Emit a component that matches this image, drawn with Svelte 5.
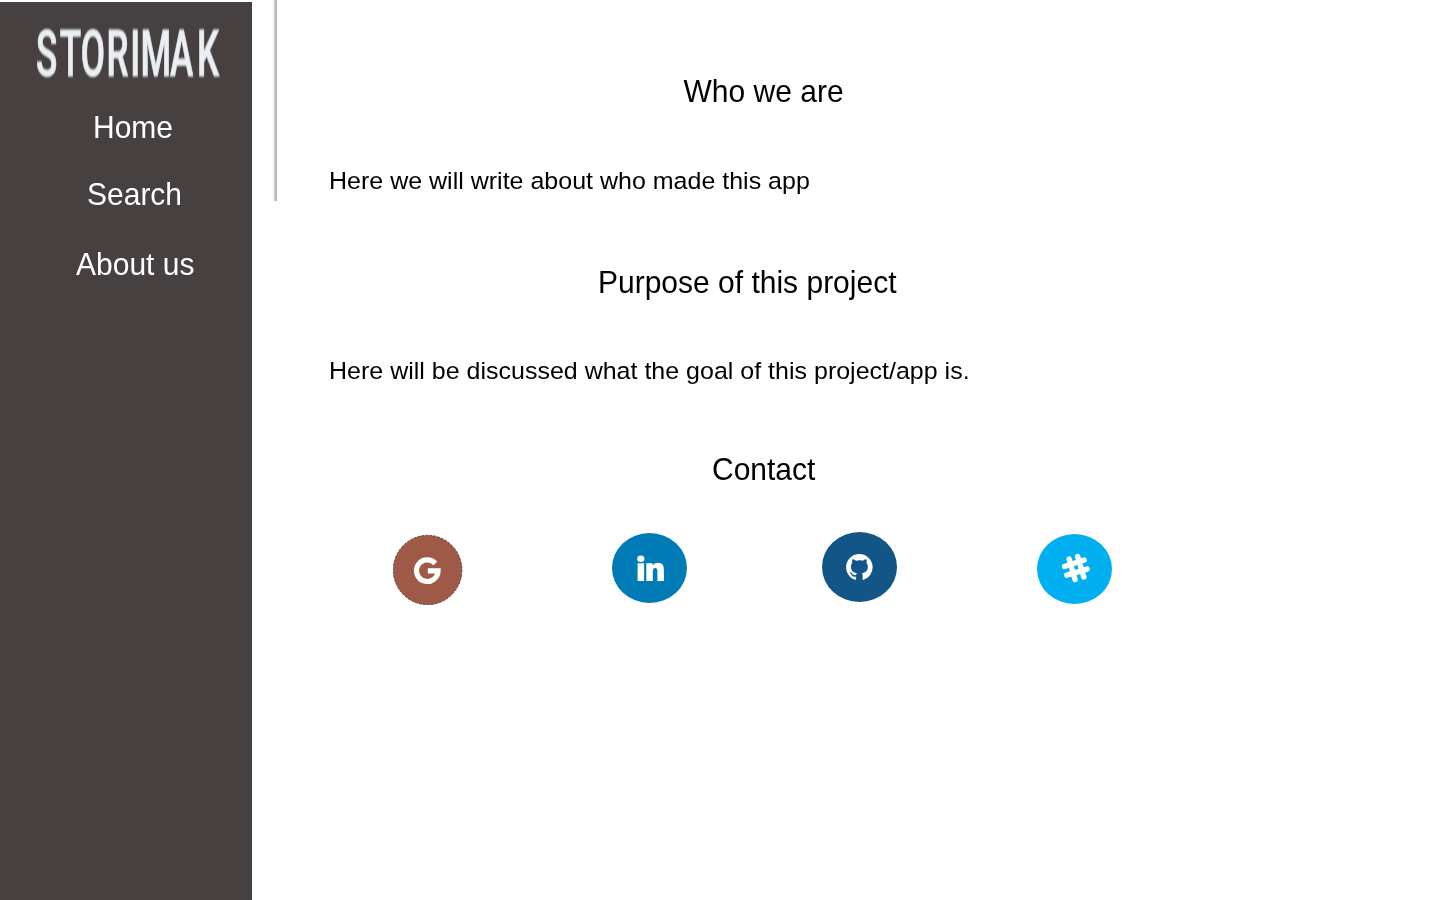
<script>
  const links = ['Home', 'Search', 'About us'];
</script>

<div class="page">
  <aside>
    <svg class="logo" width="252" height="84" viewBox="0 2 252 84" role="img" aria-label="STORIMAK">
      <text transform="translate(0 76.2) scale(.54 1)" x="66.5 110.5 149.5 197 241 260 315 365" y="0">STORIMAK</text>
    </svg>
    <nav>
      {#each links as link, i}
        <a href="#top" class="link link-{i}"><span>{link}</span></a>
      {/each}
    </nav>
  </aside>
  <div class="rule"></div>
  <main>
    <h2 class="who"><span>Who we are</span></h2>
    <p><span>Here we will write about who made this app</span></p>
    <h2 class="purpose"><span>Purpose of this project</span></h2>
    <p><span>Here will be discussed what the goal of this project/app is.</span></p>
    <h2 class="contact"><span>Contact</span></h2>
    <div class="socials">
      <svg class="google" width="70" height="71" viewBox="0 0 70 71">
        <ellipse cx="34.6" cy="36" rx="34.3" ry="34.7" fill="#9e5a47" stroke="#4b2a22" stroke-width=".8" stroke-dasharray="3 1" />
        <path d="M42.3 29.4A10.8 10.8 0 1 0 45.1 36.8H34.8" fill="none" stroke="#fff" stroke-width="5.2" />
      </svg>
      <svg class="linkedin" width="75" height="70" viewBox="0 0 75 70">
        <ellipse cx="37.5" cy="35" rx="37.5" ry="35" fill="#007bb6" />
        <g fill="#fff">
          <ellipse cx="28.8" cy="25.7" rx="3.6" ry="3.2" />
          <path d="M25.6 30.2h6.5v17.7h-6.5zM34.3 30.2h6.2v2.4c1.1-1.9 3-2.9 5.5-2.9 4.6 0 5.9 2.9 5.9 7.5v10.7h-6.5v-9.3c0-2.4-.4-3.7-2.1-3.7-1.9 0-2.5 1.5-2.5 3.8v9.2h-6.5z" />
        </g>
      </svg>
      <svg class="github" width="75" height="70" viewBox="0 0 75 70">
        <ellipse cx="37.5" cy="35" rx="37.5" ry="35" fill="#125688" />
        <g transform="translate(24.1 21.9) scale(1.66 1.66)">
          <path fill="#fff" d="M8 0C3.58 0 0 3.58 0 8c0 3.54 2.29 6.53 5.47 7.59.4.07.55-.17.55-.38 0-.19-.01-.82-.01-1.49-2.01.37-2.53-.49-2.69-.94-.09-.23-.48-.94-.82-1.13-.28-.15-.68-.52-.01-.53.63-.01 1.08.58 1.23.82.72 1.21 1.87.87 2.33.66.07-.52.28-.87.51-1.07-1.78-.2-3.64-.89-3.64-3.95 0-.87.31-1.59.82-2.15-.08-.2-.36-1.02.08-2.12 0 0 .67-.21 2.2.82A7.6 7.6 0 0 1 8 3.86c.68 0 1.36.09 2 .27 1.53-1.04 2.2-.82 2.2-.82.44 1.1.16 1.92.08 2.12.51.56.82 1.27.82 2.15 0 3.07-1.87 3.75-3.65 3.95.29.25.54.73.54 1.48 0 1.07-.01 1.93-.01 2.2 0 .21.15.46.55.38A8.01 8.01 0 0 0 16 8c0-4.42-3.58-8-8-8z" />
        </g>
      </svg>
      <svg class="slack" width="75" height="70" viewBox="0 0 75 70">
        <ellipse cx="37.5" cy="35" rx="37.5" ry="35" fill="#00aff0" />
        <path d="M32.1 25L38 45.5M40.7 22.6L46.8 43M27.5 32.5L47.1 26M29.8 41.2L50.1 35.1" fill="none" stroke="#fff" stroke-width="5.4" stroke-linecap="round" />
      </svg>
    </div>
  </main>
</div>

<style>
  :global(body) { background: #fff; overflow: hidden; }
  .page {
    display: flex;
    align-items: flex-start;
    height: 900px;
    font-family: "Liberation Sans", Arial, sans-serif;
    color: #000;
  }
  aside {
    width: 252px;
    height: 898px;
    margin-top: 2px;
    background: #474040;
    flex: none;
  }
  .logo { display: block; overflow: visible; }
  .logo text {
    font-family: Roboto, "Liberation Sans", sans-serif;
    font-size: 65px;
    font-weight: 500;
    fill: #e9eff3;
    stroke: #e9eff3;
    stroke-width: 1px;
    filter: blur(.9px);
  }
  nav { display: flex; flex-direction: column; align-items: flex-start; padding-top: 25px; }
  .link { color: #fff; text-decoration: none; font-size: 30px; line-height: 34px; white-space: nowrap; }
  .link-0 { margin-left: 93px; }
  .link-1 { margin: 33px 0 0 87px; }
  .link-2 { margin: 36px 0 0 76px; }
  .rule {
    width: 4px;
    height: 201px;
    margin-left: 21px;
    flex: none;
    background: linear-gradient(to right, #e9ebec 0 1px, #d5d7d8 1px 2px, #b4babd 2px);
  }
  main { flex: 1; padding: 75px 0 0 52px; }
  h2 { margin: 0; font-size: 30px; line-height: 34px; font-weight: 400; white-space: nowrap; }
  p { margin: 57px 0 0; font-size: 25px; line-height: 28px; white-space: nowrap; }
  .link span, h2 span { display: inline-block; transform: scaleY(1.025); transform-origin: 0 27px; }
  p span { display: inline-block; transform: scaleY(.98); transform-origin: 0 23px; }
  .who { padding-left: 354.5px; }
  .purpose { margin-top: 72px; padding-left: 269px; }
  p + .contact { margin-top: 69px; padding-left: 383px; }
  .purpose + p { margin-top: 56px; }
  .socials { display: flex; align-items: flex-start; padding: 45px 0 0 64px; }
  .socials svg { display: block; flex: none; }
  .google { margin-top: 2px; }
  .linkedin { margin: 1px 0 0 149px; }
  .github { margin-left: 135px; }
  .slack { margin: 2px 0 0 140px; }
</style>
